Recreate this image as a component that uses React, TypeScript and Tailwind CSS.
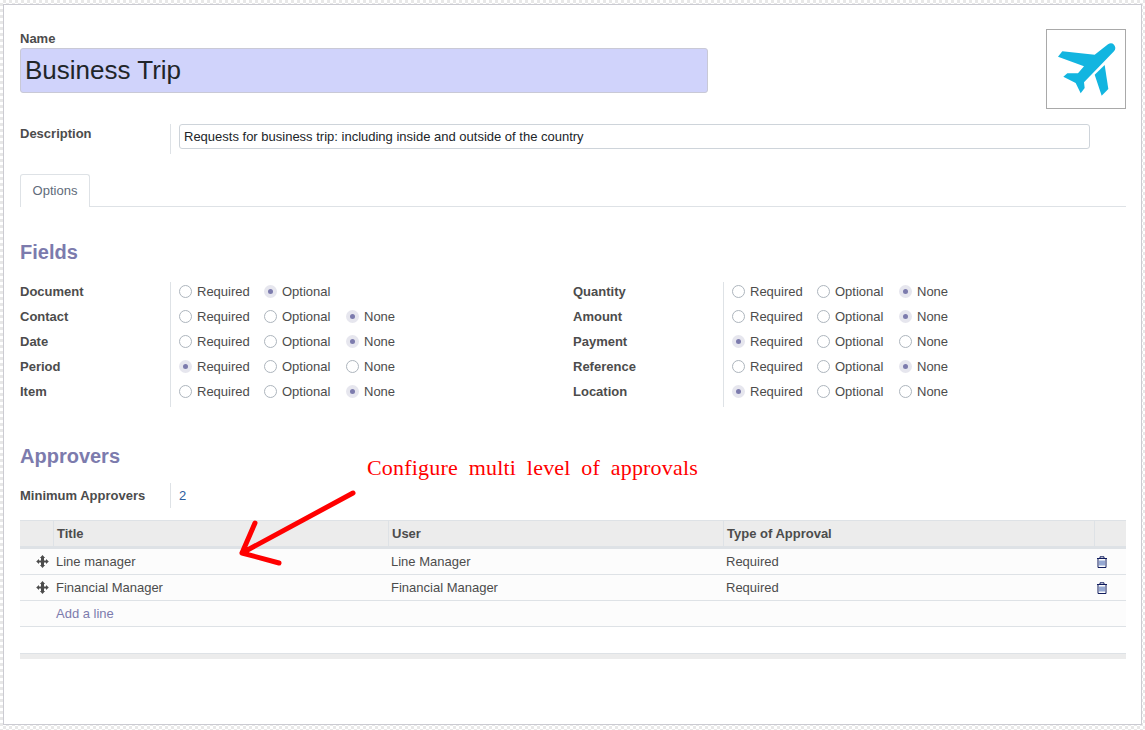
const SANS = 'font-["Liberation_Sans",Arial,sans-serif]'

const FIELDS_LEFT = [
  { label: 'Document', value: 1, options: ['Required', 'Optional'] },
  { label: 'Contact', value: 2, options: ['Required', 'Optional', 'None'] },
  { label: 'Date', value: 2, options: ['Required', 'Optional', 'None'] },
  { label: 'Period', value: 0, options: ['Required', 'Optional', 'None'] },
  { label: 'Item', value: 2, options: ['Required', 'Optional', 'None'] },
]

const FIELDS_RIGHT = [
  { label: 'Quantity', value: 2, options: ['Required', 'Optional', 'None'] },
  { label: 'Amount', value: 2, options: ['Required', 'Optional', 'None'] },
  { label: 'Payment', value: 0, options: ['Required', 'Optional', 'None'] },
  { label: 'Reference', value: 2, options: ['Required', 'Optional', 'None'] },
  { label: 'Location', value: 0, options: ['Required', 'Optional', 'None'] },
]

const APPROVERS = [
  { title: 'Line manager', user: 'Line Manager', kind: 'Required' },
  { title: 'Financial Manager', user: 'Financial Manager', kind: 'Required' },
]

function Radio({ on }: { on: boolean }) {
  if (on) {
    return (
      <span className="flex h-[13px] w-[13px] items-center justify-center rounded-full bg-[#e6e6ee]">
        <span className="h-[5px] w-[5px] rounded-full bg-[#7c7bad]" />
      </span>
    )
  }
  return <span className="h-[13px] w-[13px] rounded-full border border-[#adb5bd] bg-white" />
}

function FieldGroup({ rows }: { rows: typeof FIELDS_LEFT }) {
  return (
    <div className="w-[553px]">
      {rows.map((r) => (
        <div key={r.label} className="flex h-[25px]">
          <div className="flex h-full w-[151px] items-center border-r border-[#dee2e6] pb-[6px] text-[13px] font-bold text-[#4c4c4c]">
            {r.label}
          </div>
          <div className="flex h-full items-center pb-[6px] pl-[8px] text-[13px] text-[#4c4c4c]">
            {r.options.map((o, i) => (
              <div
                key={o}
                className={`flex items-center gap-[5px] ${i === 0 ? 'w-[85px]' : i === 1 ? 'w-[82px]' : ''}`}
              >
                <Radio on={r.value === i} />
                {o}
              </div>
            ))}
          </div>
        </div>
      ))}
    </div>
  )
}

function Plane() {
  return (
    <svg width="65" height="60" viewBox="100 115 195 180" fill="#12b5e0">
      <path d="M112 168 L125 152 L222 162 L262 131 Q272 124 280 132 Q288 142 280 152 L190 245 L192 262 L180 278 L165 247 L128 228 L140 218 L172 218 L190 197 Z" />
      <path d="M252 193 L222 222 L243 285 L263 265 Z" />
    </svg>
  )
}

function Move() {
  return (
    <svg width="13" height="13" viewBox="0 0 13 13" fill="#4c4c4c">
      <path d="M5.6 3H5V5.5H3V4L.2 6.5 3 9V7.5H5V10H3.9L6.5 13 9.1 10H8V7.5H10V9L12.8 6.5 10 4V5.5H8V3H9.1L6.5 0 3.9 3H5.6Z" />
    </svg>
  )
}

function Trash() {
  return (
    <svg width="10" height="12" viewBox="0 0 10 12" fill="none" stroke="#111d5e" strokeWidth="1">
      <path d="M0 2.5H10M3 2.5V.8H7V2.5M1 2.5V11.5H9V2.5" />
      <path d="M3 4.5V9.5M5 4.5V9.5M7 4.5V9.5" stroke="#2f54a8" />
    </svg>
  )
}

export default function App() {
  return (
    <div
      className={`h-[730px] w-[1145px] overflow-hidden bg-[repeating-conic-gradient(#e8e8e8_0%_25%,#ffffff_0%_50%)] bg-[length:6px_6px] pl-[3px] pt-[4px] ${SANS}`}
    >
      <div className="relative h-[721px] w-[1139px] border border-[#cbcbd2] bg-white pl-[16px] pr-[15px] pt-[26px] text-[13px] text-[#4c4c4c]">
        <div className="flex justify-between">
          <div className="w-[688px]">
            <div className="h-[17px] text-[13px] font-bold leading-[15px]">Name</div>
            <div className="flex h-[45px] items-center rounded-[3px] border border-[#c9c9d6] bg-[#d0d3fb] pl-[4px] text-[26px] text-[#212529]">
              Business Trip
            </div>
          </div>
          <div className="flex h-[80px] w-[80px] -translate-y-[2px] items-center justify-center border border-[#a9a9a9]">
            <Plane />
          </div>
        </div>

        <div className="mt-[13px] flex h-[30px]">
          <div className="w-[151px] border-r border-[#dee2e6] text-[13px] font-bold">Description</div>
          <div className="ml-[8px] flex h-[25px] w-[911px] items-center rounded-[3px] border border-[#ced4da] pl-[4px] text-[#212529]">
            Requests for business trip: including inside and outside of the country
          </div>
        </div>

        <div className="mt-[20px] flex h-[33px] border-b border-[#dee2e6]">
          <div className="flex h-[33px] w-[70px] items-center justify-center rounded-t-[3px] border border-b-0 border-[#dee2e6] bg-white text-[#5f6b7a]">
            Options
          </div>
        </div>

        <div className="mt-[33px] h-[24px] text-[20px] font-bold leading-[24px] text-[#7c7bad]">Fields</div>

        <div className="mt-[18px] flex">
          <FieldGroup rows={FIELDS_LEFT} />
          <FieldGroup rows={FIELDS_RIGHT} />
        </div>

        <div className="mt-[37px] h-[24px] text-[20px] font-bold leading-[24px] text-[#7c7bad]">Approvers</div>

        <div className="mt-[15px] flex h-[25px] items-center">
          <div className="flex h-full w-[151px] items-center border-r border-[#dee2e6] font-bold">Minimum Approvers</div>
          <div className="pl-[8px] text-[#2b5c9e]">2</div>
        </div>

        <div className="mt-[12px] w-[1106px]">
          <div className="flex h-[29px] border-t border-[#dee2e6] border-b-[3px] border-b-[#dee2e6] bg-[#ececec] font-bold">
            <div className="w-[34px] border-r border-[#dee2e6]" />
            <div className="flex w-[335px] items-center border-r border-[#dee2e6] pl-[3px]">Title</div>
            <div className="flex w-[335px] items-center border-r border-[#dee2e6] pl-[3px]">User</div>
            <div className="flex w-[371px] items-center border-r border-[#dee2e6] pl-[3px]">Type of Approval</div>
            <div className="flex-1" />
          </div>
          {APPROVERS.map((a) => (
            <div key={a.title} className="flex h-[26px] items-center border-b border-[#dee2e6] bg-[#fcfcfc]">
              <div className="flex w-[36px] justify-end pr-[7px]">
                <Move />
              </div>
              <div className="w-[335px]">{a.title}</div>
              <div className="w-[335px]">{a.user}</div>
              <div className="w-[370px]">{a.kind}</div>
              <div className="pl-[1px]">
                <Trash />
              </div>
            </div>
          ))}
          <div className="flex h-[26px] items-center border-b border-[#dee2e6] bg-[#fcfcfc] pl-[36px] text-[#7c7bad]">
            Add a line
          </div>
          <div className="h-[26px]" />
          <div className="h-[6px] border-t border-[#dee2e6] bg-[#ececec]" />
        </div>

        <div className="absolute left-[363px] top-[450px] font-['Liberation_Serif',serif] text-[22px] leading-[26px] tracking-[0.2px] text-[#ff0000] [word-spacing:5px]">
          Configure multi level of approvals
        </div>
        <svg className="absolute left-[230px] top-[480px]" width="130" height="90" viewBox="0 0 130 90" fill="none">
          <path
            d="M119 8 L8 68 M21 38 L8 68 L45 78"
            stroke="#ff0000"
            strokeWidth="5"
            strokeLinecap="round"
            strokeLinejoin="round"
          />
        </svg>
      </div>
    </div>
  )
}
